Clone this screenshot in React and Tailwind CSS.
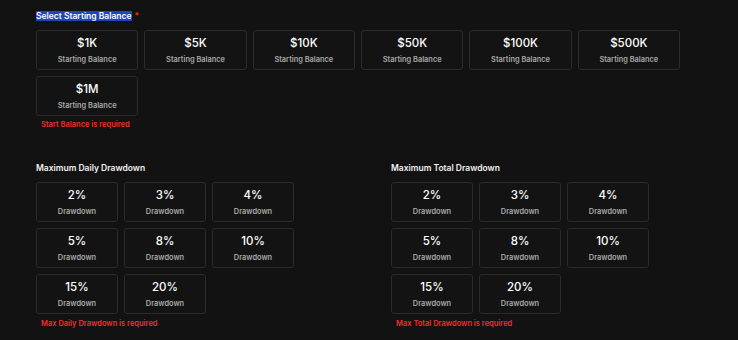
import React from 'react';

const balances = ['$1K', '$5K', '$10K', '$50K', '$100K', '$500K', '$1M'];
const drawdowns = ['2%', '3%', '4%', '5%', '8%', '10%', '15%', '20%'];

function OptionCard({ value, label }) {
    return (
        <div className="h-[40px] flex flex-col items-center justify-center rounded-[3px] border border-[#2b2b2b] bg-[#131313] cursor-pointer">
            <div className="text-[11.5px] leading-[12px] font-medium text-white">{value}</div>
            <div className="mt-[7.5px] text-[7.4px] leading-[7px] font-semibold text-[#a8a8a8]">{label}</div>
        </div>
    );
}

function DrawdownGroup({ title, error }) {
    return (
        <div className="w-[355px] shrink-0">
            <div className="text-[8.5px] leading-[10px] font-semibold text-[#f2f2f2]">{title}</div>
            <div className="mt-[9.5px] grid grid-cols-3 gap-[6px] w-[258px]">
                {drawdowns.map((d) => (
                    <OptionCard key={d} value={d} label="Drawdown" />
                ))}
            </div>
            <div className="mt-[6px] pl-[5px] text-[7.5px] leading-[8px] font-semibold text-[#f22c2c]">{error}</div>
        </div>
    );
}

export default function App() {
    return (
        <div
            className="h-[340px] w-full bg-[#121212] pl-[36px] pt-[11px] overflow-hidden"
            style={{ fontFamily: 'Inter, "Noto Sans", sans-serif' }}
        >
            <div className="text-[8.5px] leading-[10px] font-semibold">
                <span className="bg-[#1b46c2] text-white">Select Starting Balance</span>
                <span className="text-[#f22c2c] ml-[3px]">*</span>
            </div>
            <div className="mt-[9px] grid grid-cols-6 gap-[6px] w-[644px]">
                {balances.map((b) => (
                    <OptionCard key={b} value={b} label="Starting Balance" />
                ))}
            </div>
            <div className="mt-[5px] pl-[5px] text-[7.5px] leading-[8px] font-semibold text-[#f22c2c]">
                Start Balance is required
            </div>

            <div className="mt-[33.5px] flex">
                <DrawdownGroup title="Maximum Daily Drawdown" error="Max Daily Drawdown is required" />
                <DrawdownGroup title="Maximum Total Drawdown" error="Max Total Drawdown is required" />
            </div>
        </div>
    );
}
